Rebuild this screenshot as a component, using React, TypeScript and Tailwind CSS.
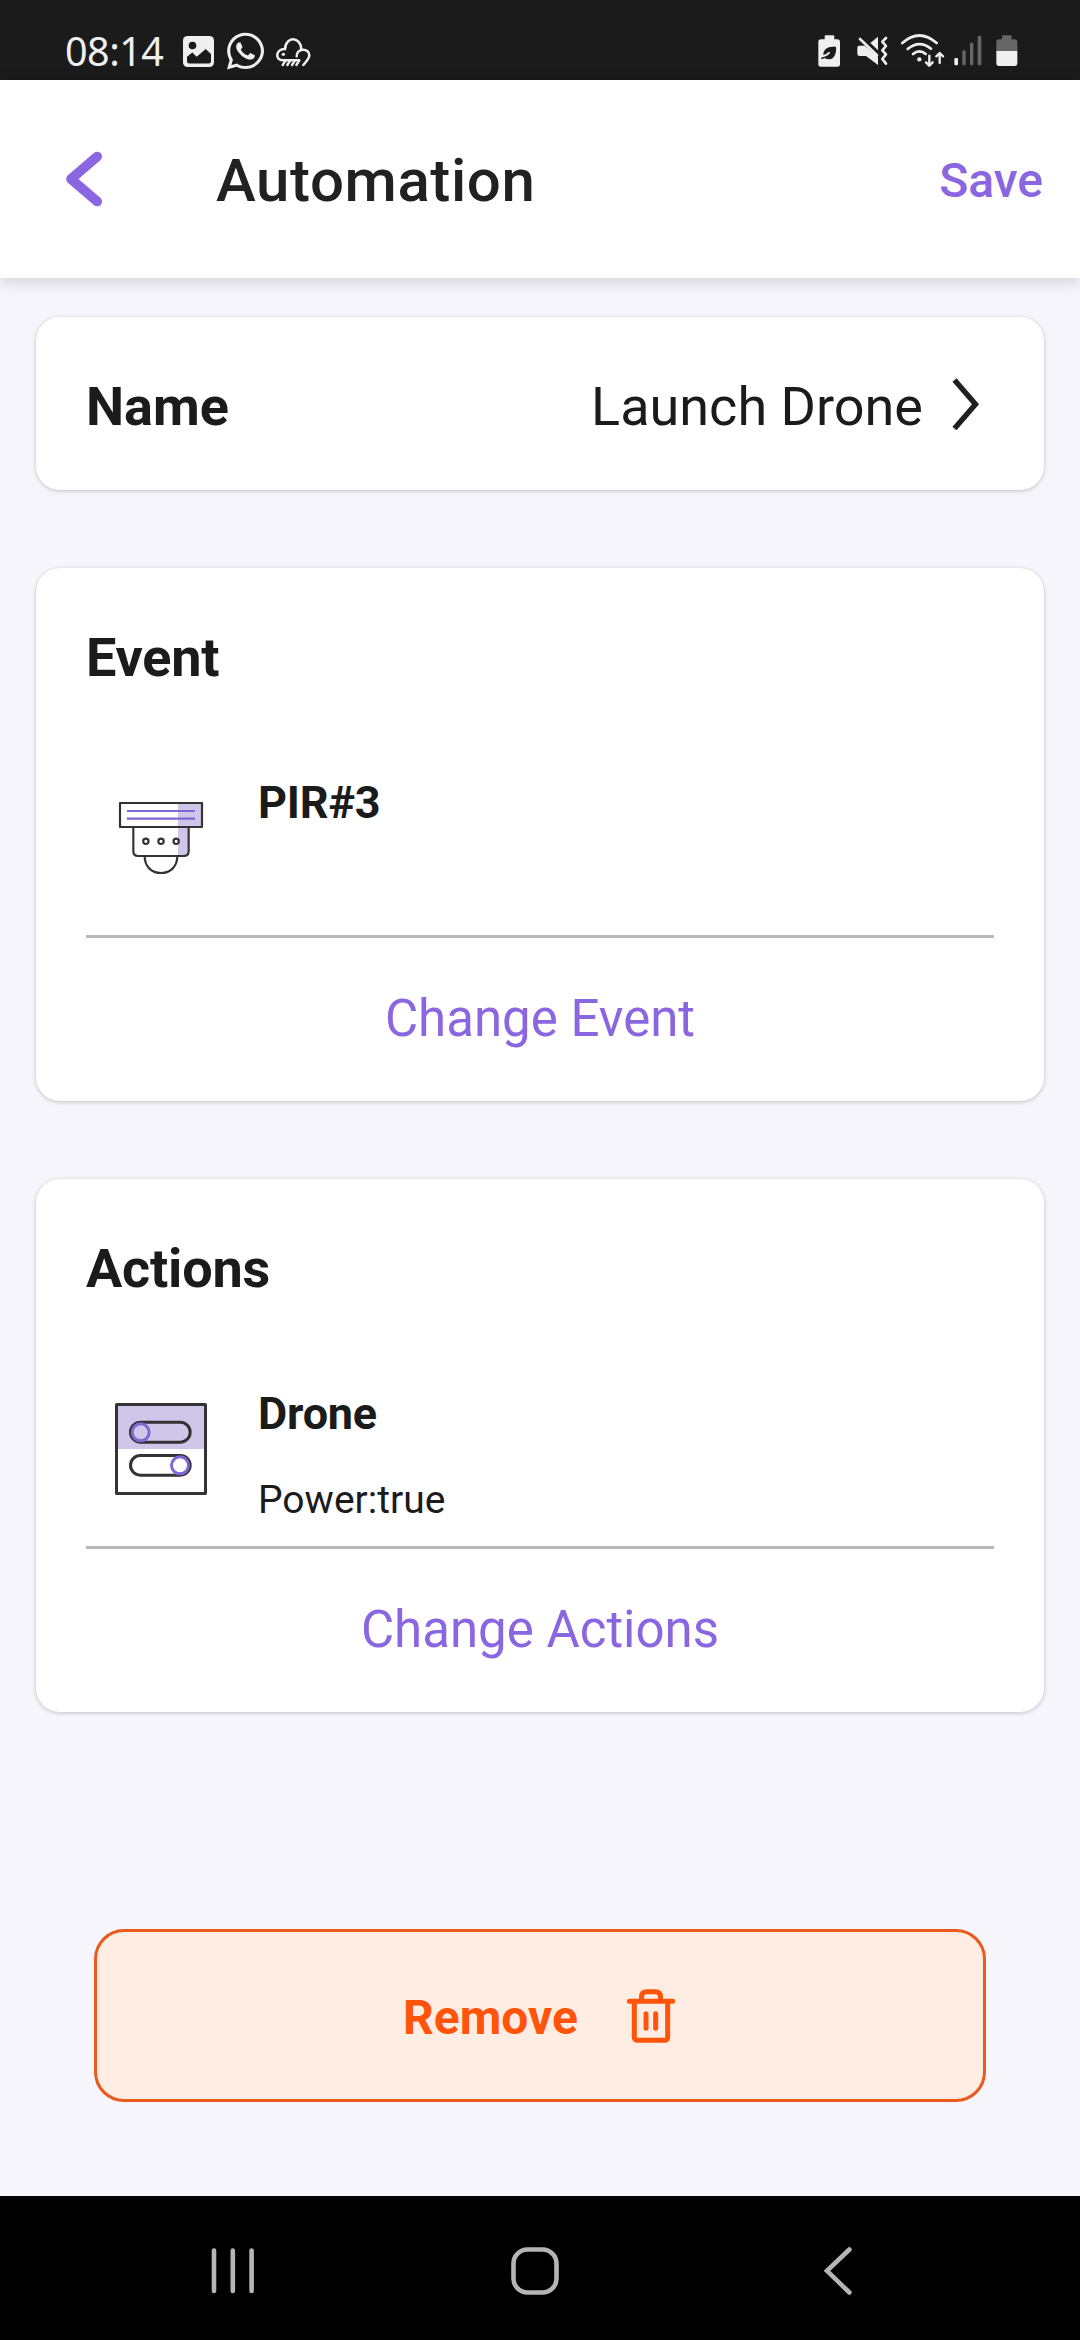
import type { ReactNode } from "react";
import { FaWhatsapp } from "react-icons/fa";

function StatusBar() {
  return (
    <div className="flex h-20 items-start justify-between bg-[#1b1b1b] pl-[65px] pr-[60px] text-[#efefef]">
      <div className="flex h-[102px] items-center">
        <span className="w-[118px] font-['Noto_Sans',sans-serif] text-[39.5px] leading-[54px] tracking-[-0.5px]">08:14</span>
        <svg width="31" height="31" viewBox="0 0 31 31">
          <rect width="31" height="31" rx="4.5" fill="#efefef" />
          <circle cx="9.5" cy="9.5" r="3.8" fill="#1b1b1b" />
          <path d="M4 20.7 9.3 16.5 13.7 20.7 22.7 13 28 18V25a2.5 2.5 0 0 1-2.5 2.5h-19A2.5 2.5 0 0 1 4 25Z" fill="#1b1b1b" />
        </svg>
        <FaWhatsapp className="ml-[13px] h-[42px] w-[37px]" preserveAspectRatio="none" />
        <svg className="ml-[10px]" width="38" height="35" viewBox="700 102 114 105" fill="none" stroke="#efefef" strokeWidth="7.5">
          <path d="M778 181H726C704 181 702 148 733 147C735 106 782 110 782 149" />
          <path d="M768 169C766 144 806 142 806 166C806 174 798 184 788 195" strokeLinecap="round" />
          <path d="M735 181l-9 14M749 181l-9 14M763 181l-9 14M776 181l-9 14" strokeLinecap="round" strokeWidth="7" />
          <circle cx="728" cy="163" r="5" fill="#efefef" stroke="none" />
        </svg>
      </div>
      <div className="flex h-[102px] items-center">
        <svg width="203" height="36" viewBox="74 99 609 108" fill="none">
          <path d="M97 118v-8q0-4 4-4h21q4 0 4 4v8h9q8 0 8 8v66q0 8-8 8H86q-8 0-8-8v-66q0-8 8-8z" fill="#efefef" />
          <path d="M131 140C133 160 126 178 108 178C97 178 91 169 94 157C97 145 108 139 131 140Z" fill="#1b1b1b" />
          <path d="M87 175q9-1 15-7" stroke="#1b1b1b" strokeWidth="5" />
          <path d="M91 168C98 168 105 164 112 157" stroke="#efefef" strokeWidth="5" />

          <path d="M234 129 257 110V151Z" fill="#efefef" />
          <path d="M203 117 254 166" stroke="#efefef" strokeWidth="8" strokeLinecap="round" />
          <path d="M200 137H217L257 170V195L221 168H202q-7 0-7-7v-18q0-6 5-6Z" fill="#efefef" />
          <path d="M281 114 270 125 281 138 270 151 281 163 270 177 281 191" stroke="#efefef" strokeWidth="8" strokeLinecap="round" strokeLinejoin="round" />

          <g stroke="#efefef" strokeWidth="8" strokeLinecap="round">
            <path d="M330 129Q381 84 433 129" />
            <path d="M346 147Q381 118 416 146" />
            <path d="M362 162Q381 146 400 162" />
          </g>
          <circle cx="381" cy="178" r="6.5" fill="#efefef" />
          <g stroke="#efefef" strokeWidth="7" strokeLinecap="round" strokeLinejoin="round">
            <path d="M411 167V197M401 187 411 197 421 187" />
            <path d="M442 189V160M432 169 442 159 452 169" />
          </g>

          <rect x="486" y="174" width="11" height="22" rx="4" fill="#efefef" />
          <rect x="510" y="151" width="10" height="45" rx="4" fill="#666" />
          <rect x="533" y="128" width="10" height="68" rx="4" fill="#666" />
          <rect x="556" y="107" width="11" height="89" rx="4" fill="#666" />

          <path d="M629 118v-8q0-4 4-4h21q4 0 4 4v8h9q8 0 8 8v27h-63v-27q0-8 8-8z" fill="#666" />
          <path d="M612 153h63v37q0 8-8 8h-47q-8 0-8-8z" fill="#efefef" />
        </svg>
      </div>
    </div>
  );
}

function Header() {
  return (
    <header className="relative flex h-[198px] items-center bg-white pl-16 pr-[37px] shadow-[0_3px_15px_rgba(0,0,0,0.17)]">
      <svg width="40" height="58" viewBox="64 150 40 58" fill="none" stroke="#8a66e0" strokeWidth="9.6" strokeLinecap="round" strokeLinejoin="round">
        <path d="M97.2 156.5 71 179 97.2 201.5" />
      </svg>
      <h1 className="ml-[112px] flex-1 pt-1 text-[60px] font-medium leading-[72px] tracking-[0.6px] text-[#212121]">Automation</h1>
      <button className="pt-[3px] text-[48px] font-medium leading-[60px] text-[#8a66e0]">Save</button>
    </header>
  );
}

function Card({ children }: { children: ReactNode }) {
  return (
    <section className="rounded-[24px] bg-white px-[50px] shadow-[0_1px_4px_rgba(0,0,0,0.22)]">{children}</section>
  );
}

function SensorIcon() {
  return (
    <svg width="90" height="76" viewBox="108 120 270 228" fill="none" stroke="#333" strokeWidth="6.5">
      <path d="M294 130H366V201H325V287H294Z" fill="#d0c6e9" stroke="none" />
      <path d="M141 153H345M141 176H345" stroke="#7f67d6" />
      <rect x="120" y="129" width="246" height="72" strokeLinejoin="round" />
      <path d="M160 201V274Q160 288 174 288H312Q326 288 326 274V201" />
      <circle cx="197.500" cy="244" r="8" />
      <circle cx="243" cy="244" r="8" />
      <circle cx="288.500" cy="244" r="8" />
      <path d="M194 288C194 319 214 339 243 339S292 319 292 288" />
    </svg>
  );
}

function SwitchIcon() {
  return (
    <svg width="96" height="98" viewBox="99 90 288 294" fill="none" stroke="#333" strokeWidth="9">
      <path d="M110 104H376V237H110Z" fill="#d0c6e9" stroke="none" />
      <rect x="109.500" y="103.500" width="267" height="267" rx="1" strokeLinejoin="round" />
      <rect x="151.500" y="156.500" width="179" height="60" rx="30" />
      <rect x="151.500" y="256.500" width="179" height="59" rx="29.500" />
      <circle cx="182" cy="187" r="25.500" stroke="#7f67d6" />
      <circle cx="300" cy="286" r="25.500" stroke="#7f67d6" />
    </svg>
  );
}

interface DeviceCardProps {
  title: string;
  icon: ReactNode;
  name: string;
  detail?: string;
  action: string;
}

function DeviceCard({ title, icon, name, detail, action }: DeviceCardProps) {
  return (
    <Card>
      <h2 className="pt-[50px] text-[54px] font-bold leading-[79px] tracking-[-0.2px]">{title}</h2>
      <div className="flex h-[241px] gap-[22px] border-b-[3px] border-[#b9b9b9] pt-[72px]">
        <div className="flex h-[138px] w-[150px] items-center justify-center">{icon}</div>
        <div className="pt-1">
          <h3 className="text-[45px] font-bold leading-[60px] tracking-[-0.2px]">{name}</h3>
          {detail && <p className="mt-[31px] text-[39px] leading-[50px]">{detail}</p>}
        </div>
      </div>
      <button className="block h-[163px] w-full text-center text-[51px] text-[#8a66e0]">{action}</button>
    </Card>
  );
}

function NavigationBar() {
  return (
    <nav className="flex h-36 items-center bg-black pb-[6px] pl-[208px] pt-[12px]">
      <svg width="50" height="50" viewBox="0 0 50 50" stroke="#b5b5b5" strokeWidth="4.600" strokeLinecap="round">
        <path d="M6 4.500V45M24.800 4.500V45M43.600 4.500V45" />
      </svg>
      <svg className="ml-[252px]" width="50" height="50" viewBox="0 0 50 50" fill="none" stroke="#b5b5b5" strokeWidth="4.600">
        <rect x="3.500" y="3.500" width="43" height="43" rx="14" />
      </svg>
      <svg className="ml-[262px]" width="34" height="50" viewBox="0 0 34 50" fill="none" stroke="#b5b5b5" strokeWidth="4.600" strokeLinecap="round">
        <path d="M27.400 3.500 5 24.800 27.400 46.500" />
      </svg>
    </nav>
  );
}

export default function App() {
  return (
    <div className="flex h-[2340px] w-[1080px] flex-col bg-[#f6f5fb] font-[Roboto,sans-serif] text-[#1b1b1b]">
      <StatusBar />
      <Header />
      <main className="flex flex-1 flex-col px-9 pt-[39px]">
        <Card>
          <div className="flex h-[173px] items-center justify-between">
            <h2 className="pt-[6px] text-[54px] font-bold leading-[70px]">Name</h2>
            <div className="flex items-center">
              <span className="pt-[6px] text-[54px] leading-[70px]">Launch Drone</span>
              <svg className="ml-[27px] mr-[12px]" width="32" height="56" viewBox="950 375 32 56" fill="none" stroke="#231f20" strokeWidth="5.400">
                <path d="M954.500 379 975.500 403.300 954.500 427.500" />
              </svg>
            </div>
          </div>
        </Card>
        <div className="mt-[78px]">
          <DeviceCard title="Event" icon={<SensorIcon />} name="PIR#3" action="Change Event" />
        </div>
        <div className="mt-[78px]">
          <DeviceCard title="Actions" icon={<SwitchIcon />} name="Drone" detail="Power:true" action="Change Actions" />
        </div>
        <button className="mx-[58px] mt-[217px] flex h-[173px] items-center justify-center gap-[47px] rounded-[30px] border-[3px] border-[#ea5a1b] bg-[#ffede4] text-[#ff540a]">
          <span className="pt-1 text-[48px] font-bold leading-[60px]">Remove</span>
          <svg width="52" height="58" viewBox="198 258 156 174" fill="none" stroke="#ff540a" strokeWidth="15" strokeLinecap="round" strokeLinejoin="round">
            <path d="M211 301H341M226 301V408Q226 418 236 418H316Q326 418 326 408V301M247.500 301V288Q247.500 272 263 272H289Q304.500 272 304.500 288V301M261 338V382M290 338V382" />
          </svg>
        </button>
      </main>
      <NavigationBar />
    </div>
  );
}
